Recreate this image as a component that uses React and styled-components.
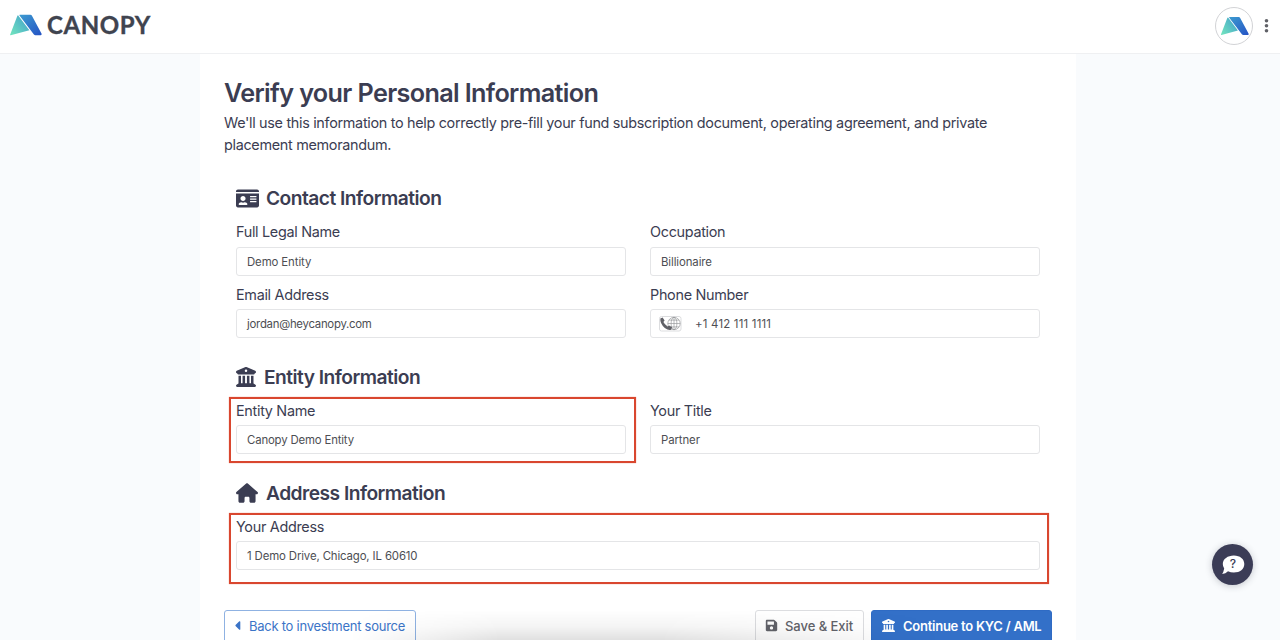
import React from 'react';
import styled, { createGlobalStyle } from 'styled-components';
import { FaIdCard, FaSave, FaCaretLeft } from 'react-icons/fa';
import { FaBuildingColumns, FaHouse } from 'react-icons/fa6';

const GlobalStyle = createGlobalStyle`
  * { box-sizing: border-box; }
  html, body { margin: 0; height: 640px; overflow: hidden; }
  body {
    background: #f9fbfd;
    color: #3b3d52;
    font-family: Inter, "Liberation Sans", sans-serif;
    font-size: 14.4px;
  }
`;

const Page = styled.div`
  position: relative;
  height: 640px;
  overflow: hidden;
`;

const Header = styled.header`
  display: flex;
  align-items: flex-start;
  justify-content: space-between;
  height: 54px;
  padding: 7px 9px 0 9px;
  background: #fff;
  border-bottom: 1px solid #eff0f2;
`;

const Brand = styled.div`
  display: flex;
  align-items: center;
  gap: 5px;
  height: 36px;
`;

const BrandName = styled.span`
  font-family: Lato, sans-serif;
  font-weight: 700;
  font-size: 24px;
  line-height: 34px;
  letter-spacing: 0.6px;
  color: #40444f;
  -webkit-text-stroke: 0.35px #40444f;
`;

const Account = styled.div`
  display: flex;
  align-items: center;
  gap: 9px;
`;

const Avatar = styled.div`
  display: grid;
  place-items: center;
  width: 38px;
  height: 38px;
  border: 1px solid #d2d3d6;
  border-radius: 50%;
`;

const Sheet = styled.main`
  width: 876px;
  height: 586px;
  margin-left: 200px;
  padding: 22px 24px 0;
  background: #fff;
`;

const Title = styled.h1`
  margin: 0;
  font-size: 25.2px;
  line-height: 34px;
  font-weight: 560;
  letter-spacing: -0.63px;
`;

const Intro = styled.p`
  margin: 2px 0 0;
  line-height: 22px;
  letter-spacing: -0.31px;
`;

const Section = styled.section`
  margin: ${(p) => p.$top}px 12px 0;
`;

const SectionTitle = styled.h2`
  display: flex;
  align-items: center;
  gap: ${(p) => p.$gap || 8}px;
  height: 24px;
  margin: 0;
  font-size: 19.2px;
  font-weight: 570;
  letter-spacing: -0.52px;
`;

const Fields = styled.div`
  display: grid;
  grid-template-columns: ${(p) => (p.$wide ? '804px' : '390px 390px')};
  column-gap: 24px;
  row-gap: 8px;
  margin-top: ${(p) => p.$top || 11}px;
`;

const FieldBox = styled.div`
  position: relative;
`;

const Label = styled.div`
  height: ${(p) => p.$height}px;
  line-height: ${(p) => (p.$height > 24 ? 22 : 20)}px;
  letter-spacing: -0.3px;
`;

const Input = styled.div`
  display: flex;
  align-items: center;
  height: 29px;
  padding: 0 10px;
  border: 1px solid #e4e5e7;
  border-radius: 3px;
  background: #fff;
  color: #4d4e53;
  font-size: 11.4px;
  letter-spacing: ${(p) => p.$spacing}px;
`;

const Highlight = styled.div`
  position: absolute;
  top: ${(p) => p.$top}px;
  left: -7px;
  right: ${(p) => p.$right}px;
  height: ${(p) => p.$height}px;
  border: 2px solid #d9472f;
  box-shadow: 0 0 1px #ee907e;
  pointer-events: none;
`;

const PhoneIcon = styled.svg`
  margin: 0 13px 0 -2px;
`;

const Actions = styled.div`
  display: flex;
  margin-top: 40px;
`;

const Button = styled.button`
  display: flex;
  flex-shrink: 0;
  align-items: center;
  width: ${(p) => p.$width}px;
  height: 36px;
  padding: 0 0 5px ${(p) => p.$pad}px;
  gap: ${(p) => p.$gap}px;
  border: 1px solid ${(p) => p.$line};
  border-radius: 3px;
  background: ${(p) => p.$fill};
  color: ${(p) => p.$ink};
  font: ${(p) => p.$weight} 13px Inter, sans-serif;
  letter-spacing: ${(p) => p.$spacing}px;
  white-space: nowrap;
  margin-left: ${(p) => p.$left || 0}px;
`;

const BottomShade = styled.div`
  position: absolute;
  left: 350px;
  width: 590px;
  bottom: 0;
  height: 30px;
  pointer-events: none;
  background: linear-gradient(to bottom, rgba(0, 0, 0, 0), rgba(0, 0, 0, 0.045) 55%, rgba(0, 0, 0, 0.12));
  mask-image: linear-gradient(to right, transparent, #000 150px, #000 310px, transparent);
`;

const HelpButton = styled.div`
  position: absolute;
  left: 1212px;
  top: 544px;
  display: grid;
  place-items: center;
  width: 41px;
  height: 41px;
  border-radius: 50%;
  background: #3b3c56;
  box-shadow: 0 1px 7px rgba(40, 42, 60, 0.25);
`;

function Mark({ width, height, id }) {
  return (
    <svg width={width} height={height} viewBox="0 0 33 22">
      <defs>
        <linearGradient id={`${id}l`} x1="0" y1="0.8" x2="1" y2="0">
          <stop offset="0" stopColor="#6fe0bf" />
          <stop offset="1" stopColor="#3f9dcb" />
        </linearGradient>
        <linearGradient id={`${id}r`} x1="0" y1="0" x2="0.9" y2="1">
          <stop offset="0" stopColor="#3c9bd0" />
          <stop offset="1" stopColor="#2656c5" />
        </linearGradient>
      </defs>
      <path d="M9.2 1.4 20.4 16.2 1.7 21.3Q.8 21.4 1.2 20.5L8.2 2.2Q8.6 1.2 9.2 1.4Z" fill={`url(#${id}l)`} />
      <path d="M10.8.8H21.4Q22.3.8 22.8 1.6L32.6 19.8Q33 21.2 31.7 21.2H26.4Q25.5 21.2 24.9 20.4L10.5 1.6Q10.1.9 10.8.8Z" fill={`url(#${id}r)`} />
    </svg>
  );
}

function Field({ label, value, labelHeight = 25, spacing = -0.1, children, highlight }) {
  return (
    <FieldBox>
      <Label $height={labelHeight}>{label}</Label>
      <Input $spacing={spacing}>{children}{value}</Input>
      {highlight && <Highlight $top={highlight.top} $height={highlight.height} $right={highlight.right} />}
    </FieldBox>
  );
}

export default function App() {
  return (
    <Page>
      <GlobalStyle />
      <Header>
        <Brand>
          <Mark width={33} height={22} id="brand" />
          <BrandName>CANOPY</BrandName>
        </Brand>
        <Account>
          <Avatar><Mark width={29} height={20} id="avatar" /></Avatar>
          <svg width="9" height="16" viewBox="0 0 9 16" fill="#606167">
            <circle cx="4.5" cy="2.8" r="1.8" />
            <circle cx="4.5" cy="7.8" r="1.8" />
            <circle cx="4.5" cy="12.8" r="1.8" />
          </svg>
        </Account>
      </Header>
      <Sheet>
        <Title>Verify your Personal Information</Title>
        <Intro>
          We'll use this information to help correctly pre-fill your fund subscription document, operating agreement, and private
          <br />
          placement memorandum.
        </Intro>
        <Section $top={30}>
          <SectionTitle $gap={7}><FaIdCard size={23} />Contact Information</SectionTitle>
          <Fields>
            <Field label="Full Legal Name" value="Demo Entity" labelHeight={26} />
            <Field label="Occupation" value="Billionaire" labelHeight={26} />
            <Field label="Email Address" value="jordan@heycanopy.com" spacing={-0.27} />
            <Field label="Phone Number" value="+1 412 111 1111" spacing={0.22}>
              <PhoneIcon width="23" height="16" viewBox="0 0 23 16" fill="none">
                <rect x=".5" y=".5" width="21.5" height="14.5" rx="2" stroke="#dcdddf" />
                <g stroke="#939498" strokeWidth=".65">
                  <circle cx="15" cy="7.5" r="6.2" />
                  <ellipse cx="15" cy="7.5" rx="2.9" ry="6.2" />
                  <path d="M15 1.3v12.4M8.8 7.5h12.4M10 4.1h10M10 10.9h10" />
                </g>
                <path d="M1.3 2.6 3.6 1.5 5.6 4.5 4.4 6Q5.8 8.8 8.6 10.4L10.2 9.4 13.2 11.6 12 13.7Q9.6 14.6 5.8 12.1 .9 7.8 1.3 2.6Z" fill="#606167" />
              </PhoneIcon>
            </Field>
          </Fields>
        </Section>
        <Section $top={27}>
          <SectionTitle><FaBuildingColumns size={20} />Entity Information</SectionTitle>
          <Fields $top={12}>
            <Field label="Entity Name" value="Canopy Demo Entity" labelHeight={24} spacing={-0.17} highlight={{ top: -4, height: 66, right: -10 }} />
            <Field label="Your Title" value="Partner" labelHeight={24} />
          </Fields>
        </Section>
        <Section $top={27}>
          <SectionTitle><FaHouse size={22} />Address Information</SectionTitle>
          <Fields $wide $top={12}>
            <Field label="Your Address" value="1 Demo Drive, Chicago, IL 60610" labelHeight={24} spacing={-0.13} highlight={{ top: -4, height: 71, right: -9 }} />
          </Fields>
        </Section>
        <Actions>
          <Button $width={192} $pad={5} $gap={4} $line="#8fb2e2" $fill="#fff" $ink="#3b74c7" $weight={400} $spacing={-0.26}>
            <FaCaretLeft size={15} />Back to investment source
          </Button>
          <Button $left={339} $width={109} $pad={9} $gap={7} $line="#dcdde0" $fill="#fff" $ink="#62636a" $weight={500} $spacing={-0.05}>
            <FaSave size={13} />Save &amp; Exit
          </Button>
          <Button $left={7} $width={181} $pad={10} $gap={8} $line="#2f6bc4" $fill="#3370c8" $ink="#fff" $weight={560} $spacing={-0.25}>
            <FaBuildingColumns size={13} />Continue to KYC / AML
          </Button>
        </Actions>
      </Sheet>
      <BottomShade />
      <HelpButton>
        <svg width="24" height="22" viewBox="0 0 24 22">
          <path d="M12.8 1.5C19 1.5 23.3 5 23.3 10S19 18.5 12.8 18.5Q9.6 18.5 7 17.2 4.6 19.6 1.2 20.1 2.6 17.9 3.2 14.6 1.8 12.5 1.8 10C1.8 5 6.8 1.5 12.8 1.5Z" fill="#fff" />
          <text x="11.9" y="14.2" textAnchor="middle" fontFamily="Inter, sans-serif" fontSize="12" fontWeight="500" fill="#3b3c56">?</text>
        </svg>
      </HelpButton>
    </Page>
  );
}
